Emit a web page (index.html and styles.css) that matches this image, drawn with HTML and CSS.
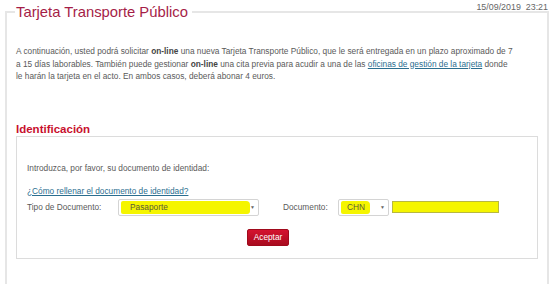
FILE: index.html
```html
<!DOCTYPE html>
<html lang="es">
<head>
    <meta charset="UTF-8">
    <meta name="viewport" content="width=device-width, initial-scale=1.0">
    <title>Tarjeta Transporte Público</title>
    <link rel="stylesheet" href="styles.css">
</head>
<body>
    <div class="stamp">15/09/2019&nbsp;&nbsp;23:21</div>

    <fieldset class="panel">
        <legend class="panel-title">Tarjeta Transporte Público</legend>

        <p class="intro">A continuación, usted podrá solicitar <b>on-line</b> una nueva Tarjeta Transporte Público, que le será entregada en un plazo aproximado de 7 a 15 días laborables. También puede gestionar <b>on-line</b> una cita previa para acudir a una de las <a href="#">oficinas de gestión de la tarjeta</a> donde le harán la tarjeta en el acto. En ambos casos, deberá abonar 4 euros.</p>

        <h2 class="section-title">Identificación</h2>

        <div class="id-box">
            <p class="hint">Introduzca, por favor, su documento de identidad:</p>
            <a href="#" class="help-link">¿Cómo rellenar el documento de identidad?</a>

            <div class="doc-row">
                <span class="label">Tipo de Documento:</span>
                <div class="select select-type">
                    <span class="mark mark-wide">Pasaporte</span>
                    <span class="arrow">▼</span>
                </div>

                <span class="label label-doc">Documento:</span>
                <div class="select select-country">
                    <span class="mark mark-short">CHN</span>
                    <span class="arrow">▼</span>
                </div>
                <div class="doc-input"></div>
            </div>

            <div class="actions">
                <button class="btn-accept">Aceptar</button>
            </div>
        </div>
    </fieldset>
</body>
</html>
```

FILE: styles.css
```css
:root {
    --crimson: #a51d47;
    --red: #c8102e;
    --text: #5a5a5a;
    --line: #dcdcdc;
    --link: #2b6e8f;
    --marker: #f5f500;
}

body {
    margin: 0;
    padding: 0;
    font-family: "Liberation Sans", Arial, sans-serif;
    color: var(--text);
    background: #fff;
    height: 287px;
    overflow: hidden;
}

.stamp {
    font-size: 8.9px;
    color: #666;
    text-align: right;
    padding: 2px 5px 0 0;
    height: 12px;
    margin-bottom: -12px;
}

.panel {
    margin: 0 4px 0 5px;
    padding: 0 8px 0 9px;
    border: 2px solid #e6e6e6;
    border-bottom: none;
    height: 282px;
    box-sizing: border-box;
}

.panel-title {
    font-size: 14.8px;
    color: var(--crimson);
    padding: 0 4px 0 1px;
    margin-left: -1px;
    line-height: 20px;
}

.intro {
    font-size: 8.3px;
    line-height: 12.5px;
    margin: 23px 26px 0 0;
}

.intro b {
    color: #444;
}

.intro a,
.help-link {
    color: var(--link);
}

.section-title {
    font-size: 11.5px;
    color: var(--red);
    margin: 39px 0 0 0;
    line-height: 14px;
}

.id-box {
    border: 1px solid var(--line);
    margin-right: 1px;
    padding: 26px 10px 12px 10px;
}

.hint {
    font-size: 8.3px;
    margin: 0 0 13px 0;
}

.help-link {
    font-size: 8.3px;
    display: block;
}

.doc-row {
    display: flex;
    align-items: center;
    font-size: 8.3px;
    margin-top: 3px;
}

.label {
    width: 91px;
}

.label-doc {
    width: 55px;
    margin-left: 24px;
}

.select {
    display: flex;
    align-items: center;
    height: 17px;
    border: 1px solid #d4d4d4;
    border-radius: 2px;
    background: #fff;
    box-sizing: border-box;
    padding: 0 3px 0 2px;
}

.select-type {
    width: 141px;
}

.select-country {
    width: 51px;
}

.mark {
    background: var(--marker);
    color: #5a5a3a;
    height: 13px;
    line-height: 13px;
    border-radius: 2px 4px 3px 2px;
}

.mark-wide {
    width: 120px;
    padding-left: 9px;
}

.mark-short {
    width: 23px;
    padding-left: 6px;
}

.arrow {
    font-size: 5px;
    color: #666;
    margin-left: auto;
}

.doc-input {
    width: 107px;
    height: 12px;
    margin-left: 3px;
    background: var(--marker);
    border: 1px solid #b8b840;
    box-sizing: border-box;
}

.actions {
    display: flex;
    justify-content: center;
    margin-top: 13px;
    padding-right: 18px;
}

.btn-accept {
    font-family: inherit;
    font-size: 8.3px;
    color: #fff;
    background: linear-gradient(#d4132f, #a90b1f);
    border: 1px solid #a00a1c;
    border-radius: 2px;
    height: 17px;
    padding: 0 6px;
}
```
